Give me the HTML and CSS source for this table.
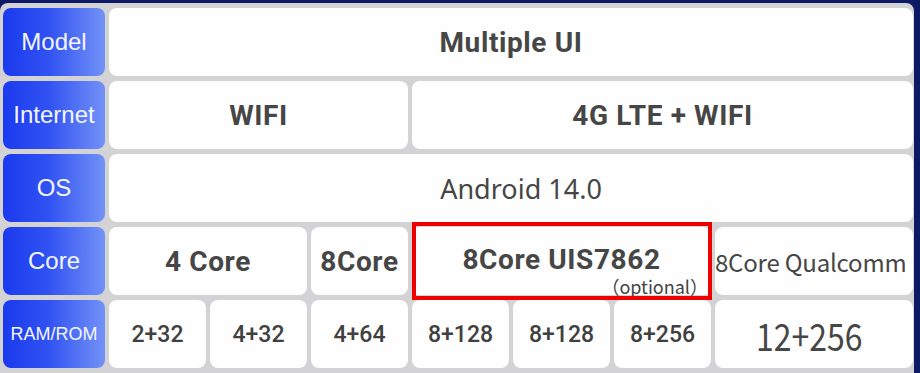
FILE: index.html
```html
<!DOCTYPE html>
<html lang="en">
<head>
<meta charset="utf-8">
<title>Spec table</title>
<link rel="stylesheet" href="styles.css">
</head>
<body>
<div class="panel">
  <div class="label">Model</div>
  <div class="cell span7 bold">Multiple UI</div>

  <div class="label">Internet</div>
  <div class="cell span3 bold">WIFI</div>
  <div class="cell span4 bold">4G LTE + WIFI</div>

  <div class="label">OS</div>
  <div class="cell span7 regular">Android 14.0</div>

  <div class="label">Core</div>
  <div class="cell span2 bold">4 Core</div>
  <div class="cell bold">8Core</div>
  <div class="cell span3 bold highlight"><span class="main">8Core UIS7862</span><span class="note">（optional）</span></div>
  <div class="cell cjk">8Core Qualcomm</div>

  <div class="label small">RAM/ROM</div>
  <div class="cell num">2+32</div>
  <div class="cell num">4+32</div>
  <div class="cell num">4+64</div>
  <div class="cell num">8+128</div>
  <div class="cell num">8+128</div>
  <div class="cell num">8+256</div>
  <div class="cell large"><span class="narrow">12+256</span></div>
</div>
</body>
</html>
```
FILE: styles.css
```css
html, body {
  margin: 0;
  padding: 0;
}
body {
  background: #0c1a66;
  width: 920px;
  height: 373px;
  overflow: hidden;
}
.panel {
  margin: 3px 6px 0 0;
  height: 370px;
  box-sizing: border-box;
  background: #d3d3d5;
  border-radius: 8px 8px 0 0;
  padding: 5px 1px 0 3px;
  display: grid;
  grid-template-columns: 102px repeat(6, 97px) 198px;
  grid-auto-rows: 68px;
  column-gap: 4px;
  row-gap: 5px;
}
.label {
  background: linear-gradient(90deg, #1a3aee 0%, #3152f2 45%, #7392f7 100%);
  border-radius: 8px;
  color: #f4f6ff;
  font-family: "Liberation Sans", Arial, sans-serif;
  font-size: 24px;
  display: flex;
  align-items: center;
  justify-content: center;
}
.label.small {
  font-size: 18px;
}
.cell {
  background: #fefefe;
  border-radius: 8px;
  display: flex;
  align-items: center;
  justify-content: center;
  color: #464646;
  white-space: nowrap;
  position: relative;
}
.span2 { grid-column: span 2; }
.span3 { grid-column: span 3; }
.span4 { grid-column: span 4; }
.span7 { grid-column: span 7; }
.bold {
  font-family: Roboto, "Liberation Sans", sans-serif;
  font-weight: 700;
  font-size: 28px;
  letter-spacing: 0.6px;
}
.regular {
  font-family: "Noto Sans", "Open Sans", sans-serif;
  font-size: 27px;
  padding-left: 20px;
}
.cjk {
  font-family: "Noto Sans CJK SC", "Noto Sans", sans-serif;
  font-size: 24px;
  justify-content: flex-start;
  letter-spacing: -0.2px;
}
.num {
  font-family: Roboto, "Liberation Sans", sans-serif;
  font-weight: 500;
  font-size: 23px;
  color: #404040;
}
.large {
  font-family: "Noto Sans CJK SC", "Noto Sans", sans-serif;
  font-size: 38px;
  font-weight: 400;
  padding-right: 10px;
}
.narrow {
  display: inline-block;
  transform: scaleX(0.84);
}
.main {
  line-height: 1;
  margin-bottom: 2px;
}
.highlight::after {
  content: "";
  position: absolute;
  inset: -5px -1px -5px 0;
  border: 4px solid #ee0000;
}
.note {
  position: absolute;
  right: 3px;
  bottom: 0;
  line-height: 1;
  font-family: "Noto Sans CJK SC", "Noto Sans", sans-serif;
  font-weight: 400;
  font-size: 18px;
  letter-spacing: 0;
  color: #444;
}
```
